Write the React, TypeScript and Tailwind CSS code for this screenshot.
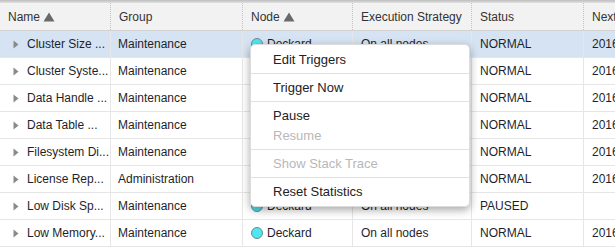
import React from 'react';

const cols = ['w-[111px]', 'w-[132px]', 'w-[110px]', 'w-[119px]', 'w-[112px]', 'flex-1'];

const rows = [
  { name: 'Cluster Size ...', group: 'Maintenance', status: 'NORMAL', next: '2016' },
  { name: 'Cluster Syste...', group: 'Maintenance', status: 'NORMAL', next: '2016' },
  { name: 'Data Handle ...', group: 'Maintenance', status: 'NORMAL', next: '2016' },
  { name: 'Data Table ...', group: 'Maintenance', status: 'NORMAL', next: '2016' },
  { name: 'Filesystem Di...', group: 'Maintenance', status: 'NORMAL', next: '2016' },
  { name: 'License Rep...', group: 'Administration', status: 'NORMAL', next: '2016' },
  { name: 'Low Disk Sp...', group: 'Maintenance', status: 'PAUSED', next: '' },
  { name: 'Low Memory...', group: 'Maintenance', status: 'NORMAL', next: '2016' },
];

const Sort = () => (
  <svg className="ml-[3px]" width="12" height="10" viewBox="0 0 12 10">
    <path d="M6 0.5 L11.5 9.5 L0.5 9.5 Z" fill="#6a6a6a" />
  </svg>
);

const HeaderCell = ({ i, children }: { i: number; children: React.ReactNode }) => (
  <div className={`${cols[i]} shrink-0 h-full flex items-center pl-2 ${i < 5 ? 'border-r border-dotted border-[#c4c4c4]' : ''}`}>
    {children}
  </div>
);

const MenuItem = ({ label, disabled }: { label: string; disabled?: boolean }) => (
  <div className={`h-5 flex items-center pl-[22px] ${disabled ? 'text-[#b8b8b8]' : 'text-[#222]'}`}>{label}</div>
);

const App: React.FC = () => {
  return (
    <div className="relative w-[615px] h-[251px] overflow-hidden bg-white text-[12px] text-[#1f1f2b]" style={{ fontFamily: '"Liberation Sans", Arial, sans-serif' }}>
      <div className="h-[3px] bg-gradient-to-b from-[#bdbdbd] to-[#e2e2e2]" />
      <div className="h-[28px] flex bg-[#f2f2f2] border-b border-[#d2d2d2] text-[#333]">
        <HeaderCell i={0}>Name<Sort /></HeaderCell>
        <HeaderCell i={1}>Group</HeaderCell>
        <HeaderCell i={2}>Node<Sort /></HeaderCell>
        <HeaderCell i={3}>Execution Strategy</HeaderCell>
        <HeaderCell i={4}>Status</HeaderCell>
        <HeaderCell i={5}>Next</HeaderCell>
      </div>

      {rows.map((r, idx) => (
        <div key={idx} className={`h-[27px] flex border-b border-[#e6e6e6] ${idx === 0 ? 'bg-[#d5e3f2]' : ''}`}>
          <div className={`${cols[0]} shrink-0 flex items-center border-r border-[#e6e6e6] pl-[13px]`}>
            <svg className="mr-[8px]" width="6" height="9" viewBox="0 0 6 9">
              <path d="M0.5 0.5 L5.5 4.5 L0.5 8.5 Z" fill="#8a8a8a" />
            </svg>
            <span className="whitespace-nowrap">{r.name}</span>
          </div>
          <div className={`${cols[1]} shrink-0 flex items-center border-r border-[#e6e6e6] pl-[7px]`}>{r.group}</div>
          <div className={`${cols[2]} shrink-0 flex items-center border-r border-[#e6e6e6] pl-2`}>
            <span className="w-[12px] h-[12px] rounded-full bg-[#4fe6f2] border border-[#6b8a93] mr-[4px]" />
            Deckard
          </div>
          <div className={`${cols[3]} shrink-0 flex items-center border-r border-[#e6e6e6] pl-2`}>On all nodes</div>
          <div className={`${cols[4]} shrink-0 flex items-center border-r border-[#e6e6e6] pl-2`}>{r.status}</div>
          <div className={`${cols[5]} flex items-center pl-2`}>{r.next}</div>
        </div>
      ))}

      <div className="absolute left-[250px] top-[44px] w-[220px] bg-white rounded-[5px] border border-[#dcdcdc] shadow-[0_3px_8px_rgba(0,0,0,0.35)] text-[13px] py-[1px]">
        <div className="pt-[4px] pb-[3px]">
          <MenuItem label="Edit Triggers" />
        </div>
        <div className="border-t border-[#e0e0ea] pt-[4px] pb-[3px]">
          <MenuItem label="Trigger Now" />
        </div>
        <div className="border-t border-[#e0e0ea] pt-[4px] pb-[3px]">
          <MenuItem label="Pause" />
          <MenuItem label="Resume" disabled />
        </div>
        <div className="border-t border-[#e0e0ea] pt-[4px] pb-[3px]">
          <MenuItem label="Show Stack Trace" disabled />
        </div>
        <div className="border-t border-[#e0e0ea] pt-[4px] pb-[3px]">
          <MenuItem label="Reset Statistics" />
        </div>
      </div>
    </div>
  );
};

export default App;
